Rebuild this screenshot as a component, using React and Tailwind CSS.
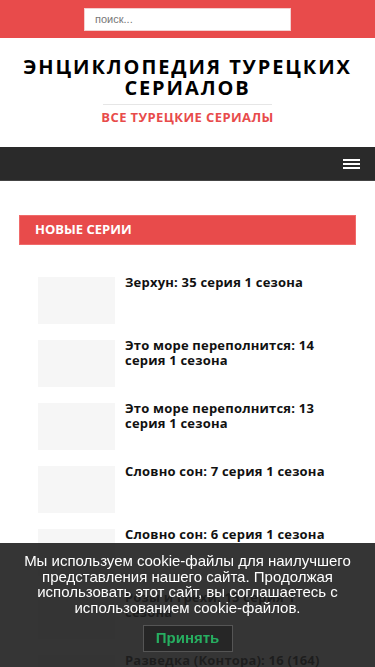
import React from "react";

const POSTS = [
  "Зерхун: 35 серия 1 сезона",
  "Это море переполнится: 14 серия 1 сезона",
  "Это море переполнится: 13 серия 1 сезона",
  "Словно сон: 7 серия 1 сезона",
  "Словно сон: 6 серия 1 сезона",
  "Розы и грехи: 15 серия 1 сезона",
  "Разведка (Контора): 16 (164) серия 4 сезона",
];

const App = () => {
  return (
    <div className="min-h-screen bg-white text-[#111] font-['Open_Sans',sans-serif]">

      {/* TOP SEARCH BAR */}
      <div className="bg-[#e84b4b] h-[38px] flex justify-center pt-[8px]">
        <div className="w-[207px] h-[23px] bg-white border border-[#f3d0d0] flex items-center px-[10px]">
          <span className="text-[11px] text-[#777] font-['Liberation_Sans',sans-serif]">поиск...</span>
        </div>
      </div>

      {/* HEADER */}
      <header className="h-[109px] flex flex-col items-center pt-[18px]">
        <h1 className="text-[20px] leading-[21px] font-bold text-center tracking-[1.9px] text-black">
          ЭНЦИКЛОПЕДИЯ ТУРЕЦКИХ<br />СЕРИАЛОВ
        </h1>
        <div className="w-[169px] h-px bg-[#e6e6e6] mt-[6px]" />
        <p className="mt-[3px] text-[13px] font-bold tracking-[0.4px] text-[#e84b4b]">ВСЕ ТУРЕЦКИЕ СЕРИАЛЫ</p>
      </header>

      {/* NAV */}
      <nav className="h-[34px] bg-[#2a2a2a] flex justify-end items-center pr-[15px] border-b border-[#444]">
        <div className="flex flex-col gap-[2px] w-[17px]">
          <span className="h-[2px] bg-white" />
          <span className="h-[2px] bg-white" />
          <span className="h-[2px] bg-white" />
        </div>
      </nav>

      {/* NEW EPISODES */}
      <section className="px-[19px] pt-[34px]">
        <div className="bg-[#e84b4b] h-[30px] flex items-center px-[15px] border border-[#f06a6a]">
          <h2 className="text-[13px] font-bold text-white">НОВЫЕ СЕРИИ</h2>
        </div>

        <ul className="pt-[32px] px-[19px] flex flex-col gap-[16px]">
          {POSTS.map(title => (
            <li key={title} className="flex gap-[10px]">
              <div className="w-[77px] h-[47px] bg-[#f6f6f6] shrink-0" />
              <a className="text-[13px] leading-[15px] font-bold tracking-[0.2px] text-[#111] -mt-[2px]">{title}</a>
            </li>
          ))}
        </ul>
      </section>

      {/* COOKIE BANNER */}
      <div className="fixed bottom-0 left-0 right-0 h-[124px] bg-[#1f1f1f]/90 flex flex-col items-center pt-[10px] font-['Liberation_Sans',sans-serif]">
        <p className="text-white text-[15px] leading-[15.5px] text-center px-[20px]">
          Мы используем cookie-файлы для наилучшего представления нашего сайта. Продолжая использовать этот сайт, вы соглашаетесь с использованием cookie-файлов.
        </p>
        <button className="mt-[10px] w-[90px] h-[27px] border border-[#555] bg-[#262626] text-[#27ae60] text-[15px] font-bold">
          Принять
        </button>
      </div>
    </div>
  );
};

export default App;
